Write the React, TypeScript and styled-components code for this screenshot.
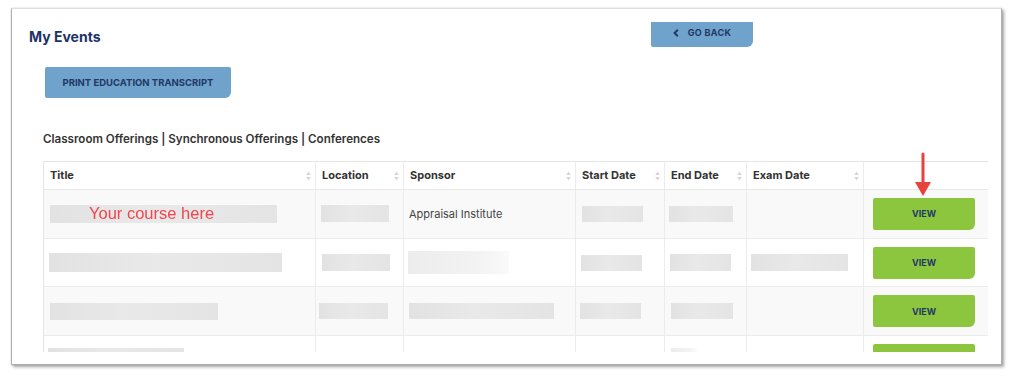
import React from "react";
import styled, { createGlobalStyle } from "styled-components";

const Global = createGlobalStyle`
  html, body { margin: 0; padding: 0; background: #ffffff; }
  body { font-family: Inter, "Noto Sans", sans-serif; }
`;

const Page = styled.div`
  padding: 8px 0 0 11px;
  width: 1013px;
  height: 381px;
  box-sizing: border-box;
`;

const Frame = styled.div`
  position: relative;
  box-sizing: border-box;
  width: 991px;
  height: 357px;
  background: #fff;
  border: 1px solid #aeaeae;
  border-top-color: #dedede;
  box-shadow: 2px 2px 3px rgba(0, 0, 0, 0.35), 0 0 2px rgba(0, 0, 0, 0.12);
  padding: 13px 0 0 17px;
  display: flex;
  flex-direction: column;
`;

const Header = styled.div`
  display: grid;
  grid-template-columns: 622px auto;
  align-items: start;
  height: 25px;
`;

const Title = styled.h1`
  margin: 6px 0 0;
  font-size: 14px;
  line-height: 18px;
  font-weight: 700;
  color: #1d3366;
`;

const BlueButton = styled.button`
  border: none;
  background: #6fa3cb;
  color: #233766;
  font-family: Inter, "Noto Sans", sans-serif;
  font-weight: 700;
  text-transform: uppercase;
  border-radius: 2px 2px 6px 2px;
  cursor: pointer;
`;

const GoBack = styled(BlueButton)`
  width: 102px;
  height: 25px;
  padding: 4px 0 0 0;
  display: flex;
  align-items: flex-start;
  justify-content: center;
  gap: 9px;
  font-size: 9px;
  line-height: 13px;
  border-radius: 0 0 6px 2px;
  letter-spacing: 0.3px;
  & svg { margin-top: 3px; }
`;

const PrintButton = styled(BlueButton)`
  align-self: flex-start;
  margin: 20px 0 0 16px;
  width: 186px;
  height: 31px;
  padding: 0;
  font-size: 9.5px;
`;

const Tabs = styled.div`
  margin: 33px 0 0 14px;
  font-size: 11.6px;
  line-height: 16px;
  font-weight: 600;
  color: #333;
`;

const TableWrap = styled.div`
  margin: 14px 0 0 14px;
  width: 945px;
  height: 191px;
  overflow: hidden;
`;

const Table = styled.table`
  border-collapse: collapse;
  table-layout: fixed;
  width: 945px;
  border-left: 1px solid #e4e4e4;
`;

const Th = styled.th`
  position: relative;
  height: 28px;
  box-sizing: border-box;
  padding: 0 0 1px 6px;
  text-align: left;
  font-size: 11px;
  font-weight: 700;
  color: #333;
  border-top: 1px solid #e4e4e4;
  border-bottom: 1px solid #e8e8e8;
  border-right: 1px solid #ececec;
  &:last-child { border-right: none; }
`;

const SortIcon = styled.span`
  position: absolute;
  right: 4px;
  top: 9px;
  display: flex;
`;

const Tr = styled.tr<{ $striped: boolean }>`
  background: ${(p) => (p.$striped ? "#f9f9f9" : "#ffffff")};
`;

const Td = styled.td`
  height: 48.7px;
  box-sizing: border-box;
  padding: 0;
  vertical-align: middle;
  border-bottom: 1px solid #ececec;
  border-right: 1px solid #ececec;
  font-size: 11px;
  color: #444;
  &:last-child { border-right: none; }
`;

const SponsorText = styled.span`
  padding-left: 5px;
`;

const Placeholder = styled.div<{ $w: number; $h: number; $dx: number; $faded?: boolean }>`
  width: ${(p) => p.$w}px;
  height: ${(p) => p.$h}px;
  margin-left: ${(p) => p.$dx}px;
  background: ${(p) =>
    p.$faded
      ? "linear-gradient(90deg, #ececec, #f3f3f3 70%, #fafafa)"
      : "linear-gradient(90deg, #e2e2e2, #e9e9e9 45%, #e4e4e4)"};
  filter: blur(0.6px);
  display: flex;
  align-items: center;
  box-sizing: border-box;
`;

const CourseText = styled.span`
  font-family: "Liberation Sans", Arial, sans-serif;
  font-size: 16.5px;
  color: #f2454d;
  padding-left: 39px;
  filter: blur(0.2px);
`;

const ViewButton = styled.button`
  display: block;
  margin-left: 9px;
  width: 102px;
  height: 32px;
  border: none;
  border-radius: 2px 2px 6px 2px;
  background: #8cc63f;
  color: #233766;
  font-family: Inter, "Noto Sans", sans-serif;
  font-weight: 700;
  font-size: 9px;
  padding: 0;
`;

const Arrow = styled.svg`
  position: absolute;
  left: 901px;
  top: 143px;
`;

type Ph = { w: number; h: number; dx: number; faded?: boolean } | null;

type Row = {
  title: Ph;
  course?: boolean;
  location: Ph;
  sponsor: Ph | string;
  start: Ph;
  end: Ph;
  exam: Ph;
};

const rows: Row[] = [
  {
    title: { w: 227, h: 18, dx: 6 },
    course: true,
    location: { w: 68, h: 17, dx: 5 },
    sponsor: "Appraisal Institute",
    start: { w: 61, h: 16, dx: 6 },
    end: { w: 64, h: 16, dx: 4 },
    exam: null,
  },
  {
    title: { w: 233, h: 19, dx: 5 },
    location: { w: 68, h: 17, dx: 6 },
    sponsor: { w: 101, h: 23, dx: 4, faded: true },
    start: { w: 61, h: 16, dx: 5 },
    end: { w: 61, h: 17, dx: 5 },
    exam: { w: 97, h: 17, dx: 4 },
  },
  {
    title: { w: 168, h: 17, dx: 6 },
    location: { w: 69, h: 16, dx: 3 },
    sponsor: { w: 145, h: 16, dx: 5 },
    start: { w: 61, h: 16, dx: 4 },
    end: { w: 62, h: 16, dx: 6 },
    exam: null,
  },
  {
    title: { w: 136, h: 24, dx: 4 },
    location: null,
    sponsor: null,
    start: null,
    end: { w: 26, h: 24, dx: 6, faded: true },
    exam: null,
  },
];

const columns = [
  { label: "Title", width: 272 },
  { label: "Location", width: 88 },
  { label: "Sponsor", width: 172 },
  { label: "Start Date", width: 89 },
  { label: "End Date", width: 82 },
  { label: "Exam Date", width: 117 },
  { label: "", width: 125 },
];

const Sort = () => (
  <SortIcon>
    <svg width="5" height="10" viewBox="0 0 5 10">
      <path d="M2.5 0.5 L4.8 4 L0.2 4 Z" fill="#d5d5d5" />
      <path d="M2.5 9.5 L4.8 6 L0.2 6 Z" fill="#d5d5d5" />
    </svg>
  </SortIcon>
);

const Cell = ({ ph }: { ph: Ph }) =>
  ph ? <Placeholder $w={ph.w} $h={ph.h} $dx={ph.dx} $faded={ph.faded} /> : null;

export default function App() {
  return (
    <>
      <Global />
      <Page>
        <Frame>
          <Header>
            <Title>My Events</Title>
            <GoBack>
              <svg width="6" height="8" viewBox="0 0 6 8">
                <path d="M4.8 0.8 L1.6 4 L4.8 7.2" stroke="#233766" strokeWidth="2" fill="none" />
              </svg>
              <span>Go Back</span>
            </GoBack>
          </Header>
          <PrintButton>Print Education Transcript</PrintButton>
          <Tabs>Classroom Offerings | Synchronous Offerings | Conferences</Tabs>
          <TableWrap>
            <Table>
              <colgroup>
                {columns.map((c, i) => (
                  <col key={i} style={{ width: c.width }} />
                ))}
              </colgroup>
              <thead>
                <tr>
                  {columns.map((c, i) => (
                    <Th key={i}>
                      {c.label}
                      {c.label && <Sort />}
                    </Th>
                  ))}
                </tr>
              </thead>
              <tbody>
                {rows.map((r, i) => (
                  <Tr key={i} $striped={i % 2 === 0}>
                    <Td>
                      {r.title && (
                        <Placeholder $w={r.title.w} $h={r.title.h} $dx={r.title.dx}>
                          {r.course && <CourseText>Your course here</CourseText>}
                        </Placeholder>
                      )}
                    </Td>
                    <Td>
                      <Cell ph={r.location} />
                    </Td>
                    <Td>
                      {typeof r.sponsor === "string" ? (
                        <SponsorText>{r.sponsor}</SponsorText>
                      ) : (
                        <Cell ph={r.sponsor} />
                      )}
                    </Td>
                    <Td>
                      <Cell ph={r.start} />
                    </Td>
                    <Td>
                      <Cell ph={r.end} />
                    </Td>
                    <Td>
                      <Cell ph={r.exam} />
                    </Td>
                    <Td>
                      <ViewButton>VIEW</ViewButton>
                    </Td>
                  </Tr>
                ))}
              </tbody>
            </Table>
          </TableWrap>
          <Arrow width="20" height="46" viewBox="0 0 20 46">
            <path d="M10 2 L10 34" stroke="#e8423d" strokeWidth="3" strokeLinecap="round" />
            <path d="M2 30 L18 30 L10 44 Z" fill="#e8423d" />
          </Arrow>
        </Frame>
      </Page>
    </>
  );
}
